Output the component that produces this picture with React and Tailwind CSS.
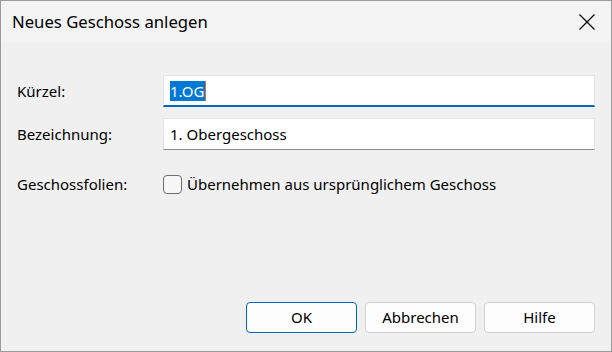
import { useState } from "react";

const font = { fontFamily: '"Segoe UI", "Noto Sans", sans-serif' };

const Button = ({ children, primary }) => (
    <button
        type="button"
        className={
            primary
                ? "w-[111px] h-[31px] rounded-[4px] border border-[#0067c0] bg-[#fdfdfd] text-[15px] text-black"
                : "w-[111px] h-[31px] rounded-[4px] border border-[#d0d0d0] bg-[#fdfdfd] text-[15px] text-black"
        }
    >
        {children}
    </button>
);

export default function App() {
    const [checked, setChecked] = useState(false);

    return (
        <div className="w-[612px] h-[352px] flex flex-col border border-[#9a9a9a] bg-[#f0f0f0] text-[#1a1a1a]" style={font}>
            {/* Title bar */}
            <div className="h-[42px] flex items-center justify-between bg-[#f3f3f3] pl-[11px] pr-[16px]">
                <span className="text-[16.7px] text-black">Neues Geschoss anlegen</span>
                <svg width="16" height="16" viewBox="0 0 16 16" className="text-black">
                    <path d="M0.5 0.5 L15.5 15.5 M15.5 0.5 L0.5 15.5" stroke="currentColor" strokeWidth="1.2" fill="none" />
                </svg>
            </div>

            {/* Form */}
            <div className="flex-1 flex flex-col pl-[16px] pr-[16px] pt-[32px]">
                <div className="grid grid-cols-[146px_1fr] gap-y-[11px] items-center text-[15px]">
                    <label className="text-black">Kürzel:</label>
                    <div className="h-[32px] flex items-center bg-white border border-[#e5e5e5] border-b-2 border-b-[#0067c0] pl-[6px]">
                        <span className="bg-[#0078d7] text-white leading-[20px]">1.OG</span>
                        <span className="w-px h-[20px] bg-[#e07020]" />
                    </div>

                    <label className="text-black">Bezeichnung:</label>
                    <div className="h-[32px] flex items-center bg-white border border-[#e5e5e5] border-b-[#8a8a8a] pl-[6px] text-black">
                        1. Obergeschoss
                    </div>
                </div>

                <div className="grid grid-cols-[146px_1fr] items-center mt-[23px] text-[15px]">
                    <span className="text-black">Geschossfolien:</span>
                    <label className="flex items-center gap-[5px] cursor-default text-black">
                        <button
                            type="button"
                            onClick={() => setChecked(!checked)}
                            className="w-[19px] h-[19px] rounded-[4px] border border-[#6e6e6e] bg-[#f7f7f7]"
                        />
                        Übernehmen aus ursprünglichem Geschoss
                    </label>
                </div>

                <div className="mt-auto mb-[18px] flex justify-end gap-[8px]">
                    <Button primary>OK</Button>
                    <Button>Abbrechen</Button>
                    <Button>Hilfe</Button>
                </div>
            </div>
        </div>
    );
}
